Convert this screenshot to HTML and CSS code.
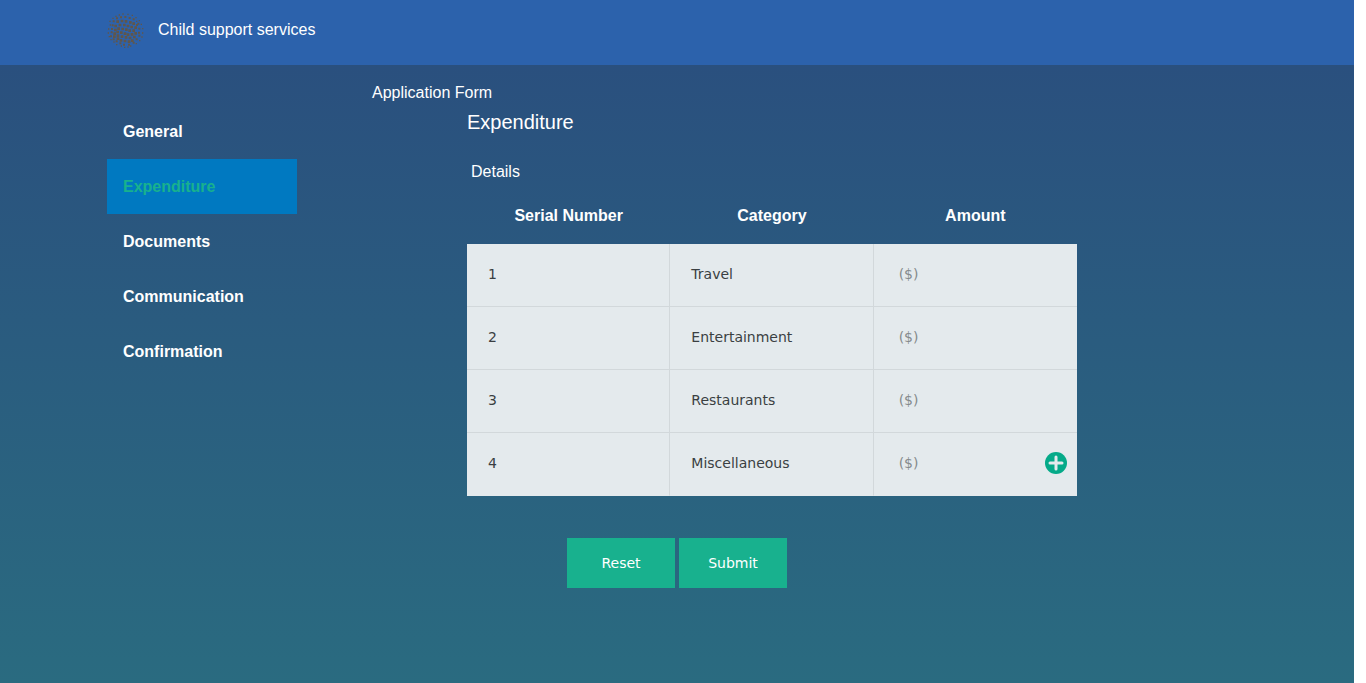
FILE: index.html
```html
<!DOCTYPE html>
<html lang="en">
<head>
<meta charset="utf-8">
<meta name="viewport" content="width=device-width, initial-scale=1">
<title>Child support services</title>
<link rel="stylesheet" href="styles.css">
</head>
<body>
<div class="page">
  <header class="topbar">
    <div class="container brand">
      <svg class="logo" viewBox="21 15 114 108" aria-hidden="true">
        <path class="dot-s" d="M58 24h0M69 21h0M84 22h0M97 25h0M108 32h0M118 41h0M124 52h0M128 65h0M128 78h0M126 90h0M119 101h0M109 110h0M92 117h0M84 120h0M74 121h0M64 117h0M50 113h0M42 105h0M33 98h0M28 89h0M25 78h0M26 66h0M31 54h0M30 43h0M39 34h0M48 28h0M110 43h0"/>
        <path class="dot-m" d="M51 34h0M63 31h0M76 30h0M89 33h0M101 37h0M111 54h0M118 65h0M117 77h0M118 86h0M110 97h0M101 107h0M87 113h0M72 113h0M61 109h0M50 103h0M41 97h0M33 88h0M35 76h0M36 66h0M38 55h0M41 43h0M115 50h0"/>
        <path class="dot-l" d="M53 44h0M66 42h0M78 43h0M91 46h0M101 50h0M47 57h0M60 54h0M73 54h0M84 57h0M95 60h0M107 62h0M46 69h0M56 65h0M68 66h0M79 68h0M89 71h0M101 71h0M44 80h0M53 75h0M64 77h0M75 80h0M84 83h0M96 82h0M107 79h0M43 89h0M54 86h0M66 89h0M78 91h0M90 93h0M103 90h0M54 95h0M63 100h0M75 102h0M87 104h0M97 101h0"/>
      </svg>
      <span>Child support services</span>
    </div>
  </header>
  <div class="container layout">
    <nav class="sidebar" aria-label="Form sections">
      <a class="nav-link" href="#general">General</a>
      <a class="nav-link active" href="#expenditure" aria-current="page">Expenditure</a>
      <a class="nav-link" href="#documents">Documents</a>
      <a class="nav-link" href="#communication">Communication</a>
      <a class="nav-link" href="#confirmation">Confirmation</a>
    </nav>
    <main class="content">
      <h1 class="form-title">Application Form</h1>
      <form class="expenses">
        <h2 class="section-title">Expenditure</h2>
        <h3 class="details">Details</h3>
        <table class="table">
          <thead>
            <tr><th scope="col">Serial Number</th><th scope="col">Category</th><th scope="col">Amount</th></tr>
          </thead>
          <tbody>
            <tr><td>1</td><td>Travel</td><td><input class="amount" type="text" placeholder="($)" aria-label="Travel amount"></td></tr>
            <tr><td>2</td><td>Entertainment</td><td><input class="amount" type="text" placeholder="($)" aria-label="Entertainment amount"></td></tr>
            <tr><td>3</td><td>Restaurants</td><td><input class="amount" type="text" placeholder="($)" aria-label="Restaurants amount"></td></tr>
            <tr><td>4</td><td>Miscellaneous</td><td><div class="amount-row"><input class="amount" type="text" placeholder="($)" aria-label="Miscellaneous amount"><button class="add" type="button" aria-label="Add row"><svg viewBox="0 0 22 22" aria-hidden="true"><circle cx="11" cy="11" r="11"/><path d="M11 5v12M5 11h12"/></svg></button></div></td></tr>
          </tbody>
        </table>
        <div class="actions">
          <button class="btn" type="reset">Reset</button>
          <button class="btn" type="submit">Submit</button>
        </div>
      </form>
    </main>
  </div>
</div>
</body>
</html>
```
FILE: styles.css
```css
* {
  box-sizing: border-box;
}

body {
  margin: 0;
  padding-right: 12px;
  background: #fff;
  color: #fff;
  font-family: "Liberation Sans", Arial, sans-serif;
  font-size: 16px;
  line-height: 24px;
}

.page {
  min-height: 100vh;
  background: linear-gradient(#2a4d7e, #2a6b80);
}

.container {
  max-width: 1140px;
  margin: 0 auto;
}

.topbar {
  background: #2c62ac;
}

.brand {
  display: flex;
  align-items: center;
  gap: 13px;
  padding: 12px 0 17px;
}

.logo {
  width: 38px;
  height: 36px;
  fill: none;
  stroke: #60564a;
  stroke-linecap: square;
}

.dot-s {
  stroke-width: 4;
}

.dot-m {
  stroke-width: 6;
}

.dot-l {
  stroke-width: 8;
}

.layout {
  display: grid;
  grid-template-columns: 190px 1fr;
  column-gap: 75px;
}

.sidebar {
  padding-top: 39px;
}

.nav-link {
  display: block;
  padding: 16px 16px 15px;
  color: #fff;
  font-weight: bold;
  text-decoration: none;
}

.active {
  background: #0079c1;
  color: #18b18e;
}

.content {
  padding-top: 16px;
}

.form-title,
.section-title,
.details {
  margin: 0;
  font-size: 16px;
  font-weight: normal;
}

.expenses {
  margin: 0 170px 0 95px;
  padding-bottom: 40px;
}

.section-title {
  padding: 5px 0;
  font-size: 20px;
}

.details {
  padding: 21px 4px 3px;
}

.table {
  width: 100%;
  table-layout: fixed;
  border-collapse: separate;
  border-spacing: 0;
}

.table th {
  height: 57px;
  padding: 0;
}

.table td {
  height: 63px;
  padding: 0 21px 2px;
  background: #e4eaed;
  color: #3a3f42;
  border-right: 1px solid #d2d8db;
  border-bottom: 1px solid #d2d8db;
  font-family: "DejaVu Sans", sans-serif;
  font-size: 14px;
}

.table td:last-child {
  padding-right: 10px;
  border-right: 0;
}

.table tr:last-child td {
  border-bottom-color: #e4eaed;
}

.amount {
  width: 100%;
  min-width: 0;
  padding: 0 4px;
  border: 0;
  background: transparent;
  color: #3a3f42;
  font: inherit;
}

.amount::placeholder {
  color: #858a8c;
  opacity: 1;
}

.amount-row {
  display: flex;
  align-items: center;
}

.add {
  flex: none;
  width: 22px;
  height: 22px;
  padding: 0;
  border: 0;
  background: none;
}

.add svg {
  display: block;
  fill: #05aa89;
  stroke: none;
}

.add path {
  stroke: #e4eaed;
  stroke-width: 3;
  stroke-linecap: round;
}

.actions {
  display: flex;
  gap: 4px;
  padding: 42px 0 0 100px;
}

.btn {
  width: 108px;
  height: 50px;
  padding: 0;
  border: 0;
  background: #18b18e;
  color: #fff;
  font-family: "DejaVu Sans", sans-serif;
  font-size: 14px;
}
```
